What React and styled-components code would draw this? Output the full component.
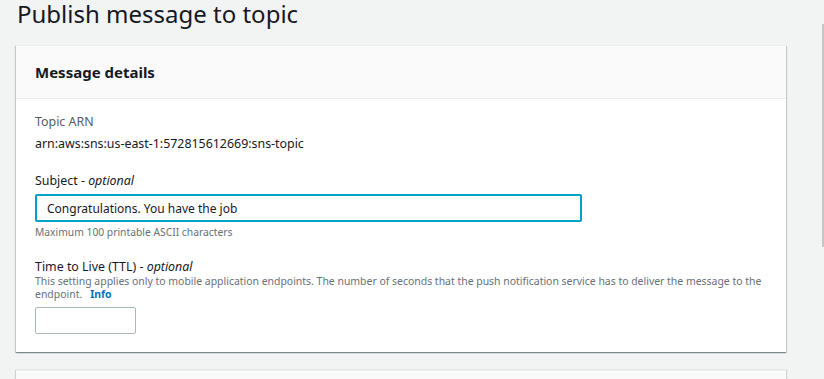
import React from 'react';
import styled, { createGlobalStyle } from 'styled-components';

const GlobalStyle = createGlobalStyle`
  html, body {
    margin: 0;
    padding: 0;
    height: 100%;
    overflow: hidden;
    background: #f2f3f3;
  }
  body {
    font-family: "Noto Sans", "Open Sans", sans-serif;
    color: #16191f;
  }
`;

const Page = styled.div`
  position: relative;
  height: 379px;
  padding: 1px 38px 0 16px;
`;

const Title = styled.h1`
  margin: 0 0 18px 1px;
  font-size: 24px;
  line-height: 26px;
  font-weight: 400;
  color: #16191f;
`;

const Card = styled.section`
  background: #fff;
  border-top: 1px solid #eaeded;
  box-shadow: 0 1px 1px 0 rgba(0, 28, 36, 0.3), 1px 1px 1px 0 rgba(0, 28, 36, 0.15),
    -1px 1px 1px 0 rgba(0, 28, 36, 0.15);
  margin-bottom: 18px;
`;

const CardHeader = styled.header`
  background: #fafafa;
  border-bottom: 1px solid #eaeded;
  height: 52px;
  padding: 0 19px;
  display: flex;
  align-items: center;
`;

const CardTitle = styled.h2`
  margin: 0;
  font-size: 15px;
  font-weight: 700;
  color: #16191f;
`;

const CardBody = styled.div`
  padding: 15px 19px 18px 19px;
  display: flex;
  flex-direction: column;
`;

const Field = styled.div`
  display: flex;
  flex-direction: column;
  align-items: flex-start;
  margin-bottom: ${(p) => p.$gap || 0}px;
`;

const Label = styled.div`
  font-size: 12.4px;
  line-height: 16px;
  color: ${(p) => (p.$muted ? '#545b64' : '#16191f')};

  em {
    font-style: italic;
  }
`;

const Value = styled.div`
  font-size: 12.4px;
  line-height: 16px;
  margin-top: 6px;
  color: #16191f;
`;

const TextInput = styled.input`
  box-sizing: border-box;
  margin-top: ${(p) => p.$top}px;
  width: ${(p) => p.$width}px;
  height: ${(p) => p.$height}px;
  padding: 0 10px;
  font-family: inherit;
  font-size: 12px;
  color: #16191f;
  background: #fff;
  border: ${(p) => (p.$focused ? '2px solid #00a1c9' : '1px solid #aab7b8')};
  border-radius: 2px;
  outline: none;
  caret-color: #16191f;
`;

const Constraint = styled.div`
  font-size: 10.3px;
  line-height: 14px;
  margin-top: 3px;
  color: #687078;
`;

const Description = styled.div`
  font-size: 10.45px;
  line-height: 13px;
  color: #687078;
  max-width: 740px;
`;

const InfoLink = styled.a`
  margin-left: 8px;
  font-weight: 700;
  color: #0073bb;
  text-decoration: none;
`;

const NextCard = styled.section`
  background: #fafafa;
  border-top: 1px solid #eaeded;
  height: 60px;
  box-shadow: 1px 0 1px 0 rgba(0, 28, 36, 0.15), -1px 0 1px 0 rgba(0, 28, 36, 0.15);
`;

const ScrollThumb = styled.div`
  position: absolute;
  right: 0;
  top: 24px;
  width: 2px;
  height: 223px;
  background: #c6c6c6;
`;

export default function App() {
  return (
    <>
      <GlobalStyle />
      <Page>
        <Title>Publish message to topic</Title>
        <Card>
          <CardHeader>
            <CardTitle>Message details</CardTitle>
          </CardHeader>
          <CardBody>
            <Field $gap={21}>
              <Label $muted>Topic ARN</Label>
              <Value>arn:aws:sns:us-east-1:572815612669:sns-topic</Value>
            </Field>
            <Field $gap={20}>
              <Label>
                Subject - <em>optional</em>
              </Label>
              <TextInput
                $focused
                $top={5}
                $width={547}
                $height={28}
                defaultValue="Congratulations. You have the job"
              />
              <Constraint>Maximum 100 printable ASCII characters</Constraint>
            </Field>
            <Field>
              <Label>
                Time to Live (TTL) - <em>optional</em>
              </Label>
              <Description>
                This setting applies only to mobile application endpoints. The number of seconds
                that the push notification service has to deliver the message to the endpoint.
                <InfoLink href="#">Info</InfoLink>
              </Description>
              <TextInput $top={6} $width={101} $height={27} />
            </Field>
          </CardBody>
        </Card>
        <NextCard />
        <ScrollThumb />
      </Page>
    </>
  );
}
